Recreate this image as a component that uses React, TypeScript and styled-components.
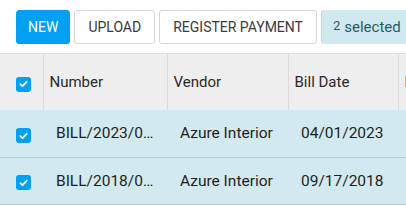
import React from 'react';
import styled, {createGlobalStyle} from 'styled-components';

const GlobalStyle = createGlobalStyle`
    body {
        margin: 0;
        background: #ffffff;
        font-family: Roboto, "Liberation Sans", sans-serif;
        color: #212529;
    }
`;

const Page = styled.div`
    width: 406px;
    height: 206px;
    overflow: hidden;
`;

const ControlPanel = styled.div`
    display: flex;
    gap: 4px;
    padding: 10px 0 9px 16px;
    border-bottom: 1px solid #e2e2e2;
    white-space: nowrap;
`;

const Button = styled.button<{$primary?: boolean}>`
    height: 34px;
    padding: 0 ${({$primary}) => ($primary ? 11 : 13)}px;
    border-radius: 3px;
    font-family: inherit;
    font-size: 14px;
    flex-shrink: 0;
    border: 1px solid ${({$primary}) => ($primary ? '#02a0f2' : '#d6d6d6')};
    background: ${({$primary}) => ($primary ? '#02a0f2' : '#ffffff')};
    color: ${({$primary}) => ($primary ? '#ffffff' : '#3b3b3b')};
`;

const Selection = styled.div`
    height: 34px;
    display: flex;
    align-items: center;
    padding: 0 12px 0 11px;
    border-radius: 3px;
    background: #d0e9ef;
    border-left: 1px solid #b9dbe3;
    color: #1d5e6b;
    font-size: 15px;
    flex-shrink: 0;

    sup {
        font-size: 13px;
        margin-right: 4px;
        position: relative;
        top: -2px;
    }
`;

const Table = styled.table`
    border-collapse: collapse;
    table-layout: fixed;
    width: 519px;

    th, td {
        box-sizing: border-box;
    }
`;

const HeadCell = styled.th<{$w: number}>`
    width: ${({$w}) => $w}px;
    height: 56px;
    padding: 0 0 0 6px;
    background: #eeeeee;
    border-right: 1px solid #dcdcdc;
    text-align: left;
    font-weight: 400;
    font-size: 15px;
    color: #2a2a2a;
    white-space: nowrap;
    overflow: hidden;
`;

const Row = styled.tr`
    background: #d1e9ef;
    border-bottom: 1px solid #b9d2d8;
`;

const Cell = styled.td`
    height: 47px;
    padding: 0 8px 0 13px;
    font-size: 15.5px;
    white-space: nowrap;
    overflow: hidden;
    text-overflow: ellipsis;
    color: #1f1f1f;
`;

const BoxCell = styled.td`
    padding: 0 0 0 16px;
`;

const HeadBoxCell = styled(HeadCell)`
    padding: 0 0 0 16px;
    vertical-align: middle;
`;

const Check = styled.span`
    display: inline-flex;
    align-items: center;
    justify-content: center;
    width: 15px;
    height: 15px;
    border-radius: 3px;
    background: #02a0f2;
    vertical-align: middle;
    position: relative;
    top: 1px;
`;

function Checkbox() {
    return (
        <Check>
            <svg width="9" height="8" viewBox="0 0 9 8">
                <path d="M1.3 4.2 L3.5 6.2 L7.7 1.8" fill="none" stroke="#fff" strokeWidth="1.8" strokeLinecap="round" strokeLinejoin="round"/>
            </svg>
        </Check>
    );
}

const bills = [
    {number: 'BILL/2023/04/0001', vendor: 'Azure Interior', date: '04/01/2023'},
    {number: 'BILL/2018/09/0001', vendor: 'Azure Interior', date: '09/17/2018'},
];

export default function App() {
    return (
        <Page>
            <GlobalStyle/>
            <ControlPanel>
                <Button $primary>NEW</Button>
                <Button>UPLOAD</Button>
                <Button>REGISTER PAYMENT</Button>
                <Selection><sup>2</sup>selected</Selection>
            </ControlPanel>
            <Table>
                <thead>
                    <tr>
                        <HeadBoxCell $w={43}><Checkbox/></HeadBoxCell>
                        <HeadCell $w={124}>Number</HeadCell>
                        <HeadCell $w={121}>Vendor</HeadCell>
                        <HeadCell $w={110}>Bill Date</HeadCell>
                        <HeadCell $w={121}>Due Date</HeadCell>
                    </tr>
                </thead>
                <tbody>
                    {bills.map((b) => (
                        <Row key={b.number}>
                            <BoxCell><Checkbox/></BoxCell>
                            <Cell>{b.number}</Cell>
                            <Cell>{b.vendor}</Cell>
                            <Cell>{b.date}</Cell>
                            <Cell>{b.date}</Cell>
                        </Row>
                    ))}
                </tbody>
            </Table>
        </Page>
    );
}
